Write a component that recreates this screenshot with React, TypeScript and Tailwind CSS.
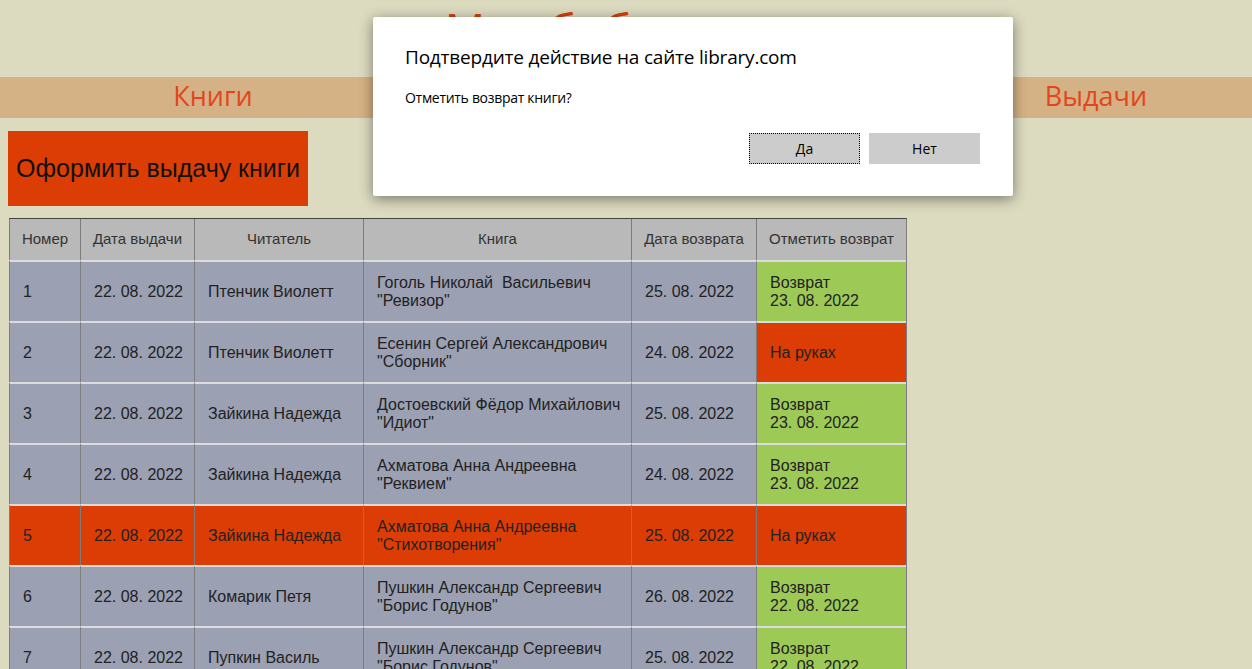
import React from 'react';

type Loan = {
    id: number;
    issued: string;
    reader: string;
    author: string;
    title: string;
    due: string;
    returned?: string;
    overdue?: boolean;
};

const LOANS: Loan[] = [
    { id: 1, issued: '22. 08. 2022', reader: 'Птенчик Виолетт', author: 'Гоголь Николай  Васильевич', title: '"Ревизор"', due: '25. 08. 2022', returned: '23. 08. 2022' },
    { id: 2, issued: '22. 08. 2022', reader: 'Птенчик Виолетт', author: 'Есенин Сергей Александрович', title: '"Сборник"', due: '24. 08. 2022' },
    { id: 3, issued: '22. 08. 2022', reader: 'Зайкина Надежда', author: 'Достоевский Фёдор Михайлович', title: '"Идиот"', due: '25. 08. 2022', returned: '23. 08. 2022' },
    { id: 4, issued: '22. 08. 2022', reader: 'Зайкина Надежда', author: 'Ахматова Анна Андреевна', title: '"Реквием"', due: '24. 08. 2022', returned: '23. 08. 2022' },
    { id: 5, issued: '22. 08. 2022', reader: 'Зайкина Надежда', author: 'Ахматова Анна Андреевна', title: '"Стихотворения"', due: '25. 08. 2022', overdue: true },
    { id: 6, issued: '22. 08. 2022', reader: 'Комарик Петя', author: 'Пушкин Александр Сергеевич', title: '"Борис Годунов"', due: '26. 08. 2022', returned: '22. 08. 2022' },
    { id: 7, issued: '22. 08. 2022', reader: 'Пупкин Василь', author: 'Пушкин Александр Сергеевич', title: '"Борис Годунов"', due: '25. 08. 2022', returned: '22. 08. 2022' },
];

const HEADERS = [
    { label: 'Номер', w: 'w-[71px]' },
    { label: 'Дата выдачи', w: 'w-[114px]' },
    { label: 'Читатель', w: 'w-[169px]' },
    { label: 'Книга', w: 'w-[268px]' },
    { label: 'Дата возврата', w: 'w-[125px]' },
    { label: 'Отметить возврат', w: 'w-[150px]' },
];

const cell = 'h-[61px] px-[13px] border-t-2 border-t-[#dcdcdc] border-l border-l-[#7d7d7d] align-middle text-left whitespace-pre overflow-hidden';

const ConfirmDialog: React.FC = () => (
    <div className="absolute left-[373px] top-[17px] w-[640px] h-[179px] bg-white rounded-[2px] shadow-[0_3px_14px_rgba(0,0,0,0.45)] font-['Open_Sans',sans-serif]">
        <div className="pl-[32px] pt-[26px] text-[19px] text-black tracking-[-0.2px]">Подтвердите действие на сайте library.com</div>
        <div className="pl-[32px] pt-[15px] text-[14px] text-black tracking-[-0.3px]">Отметить возврат книги?</div>
        <div className="flex justify-end gap-[9px] pr-[33px] pt-[25px]">
            <button className="w-[111px] h-[31px] bg-[#cccccc] border border-dotted border-black text-[14px] text-black">Да</button>
            <button className="w-[111px] h-[31px] bg-[#cccccc] border border-[#cccccc] text-[14px] text-black">Нет</button>
        </div>
    </div>
);

const App: React.FC = () => {
    return (
        <div className="relative h-[669px] overflow-hidden bg-[#dcdbc0] font-['Liberation_Sans',Arial,sans-serif]">
            <h1 className="h-[77px] text-center text-[45px] leading-none pt-[7px] text-[#d4400c] font-['Open_Sans',sans-serif]">Моя библиотека</h1>
            <nav className="flex h-[41px] items-center pb-[5px] bg-[#d5b285] text-[27px] leading-none text-[#e2461a] font-['Open_Sans',sans-serif]">
                <a className="w-[426px] text-center">Книги</a>
                <a className="flex-1 text-center">Читатели</a>
                <a className="w-[312px] text-center">Выдачи</a>
            </nav>
            <button className="ml-[8px] mt-[13px] w-[300px] h-[75px] bg-[#db3d05] text-[25px] text-[#111]">Оформить выдачу книги</button>
            <table className="ml-[9px] mt-[12px] w-[897px] table-fixed border-separate border-spacing-0 border-t border-t-[#444] border-r border-r-[#7d7d7d] text-[#222]">
                <thead>
                    <tr className="bg-[#b9b9b9]">
                        {HEADERS.map((h) => (
                            <th key={h.label} className={`${h.w} h-[41px] border-l border-l-[#7d7d7d] text-[15px] font-normal text-[#333] text-center whitespace-nowrap`}>
                                {h.label}
                            </th>
                        ))}
                    </tr>
                </thead>
                <tbody className="text-[16px] leading-[18px]">
                    {LOANS.map((r) => (
                        <tr key={r.id} className={r.overdue ? 'bg-[#db3d05]' : 'bg-[#9ba0b3]'}>
                            <td className={cell}>{r.id}</td>
                            <td className={cell}>{r.issued}</td>
                            <td className={cell}>{r.reader}</td>
                            <td className={cell}>
                                {r.author}
                                <br />
                                {r.title}
                            </td>
                            <td className={cell}>{r.due}</td>
                            <td className={`${cell} ${r.returned ? 'bg-[#9dca57]' : 'bg-[#db3d05]'}`}>
                                {r.returned ? (
                                    <>
                                        Возврат
                                        <br />
                                        {r.returned}
                                    </>
                                ) : (
                                    'На руках'
                                )}
                            </td>
                        </tr>
                    ))}
                </tbody>
            </table>
            <ConfirmDialog />
        </div>
    );
};

export default App;
